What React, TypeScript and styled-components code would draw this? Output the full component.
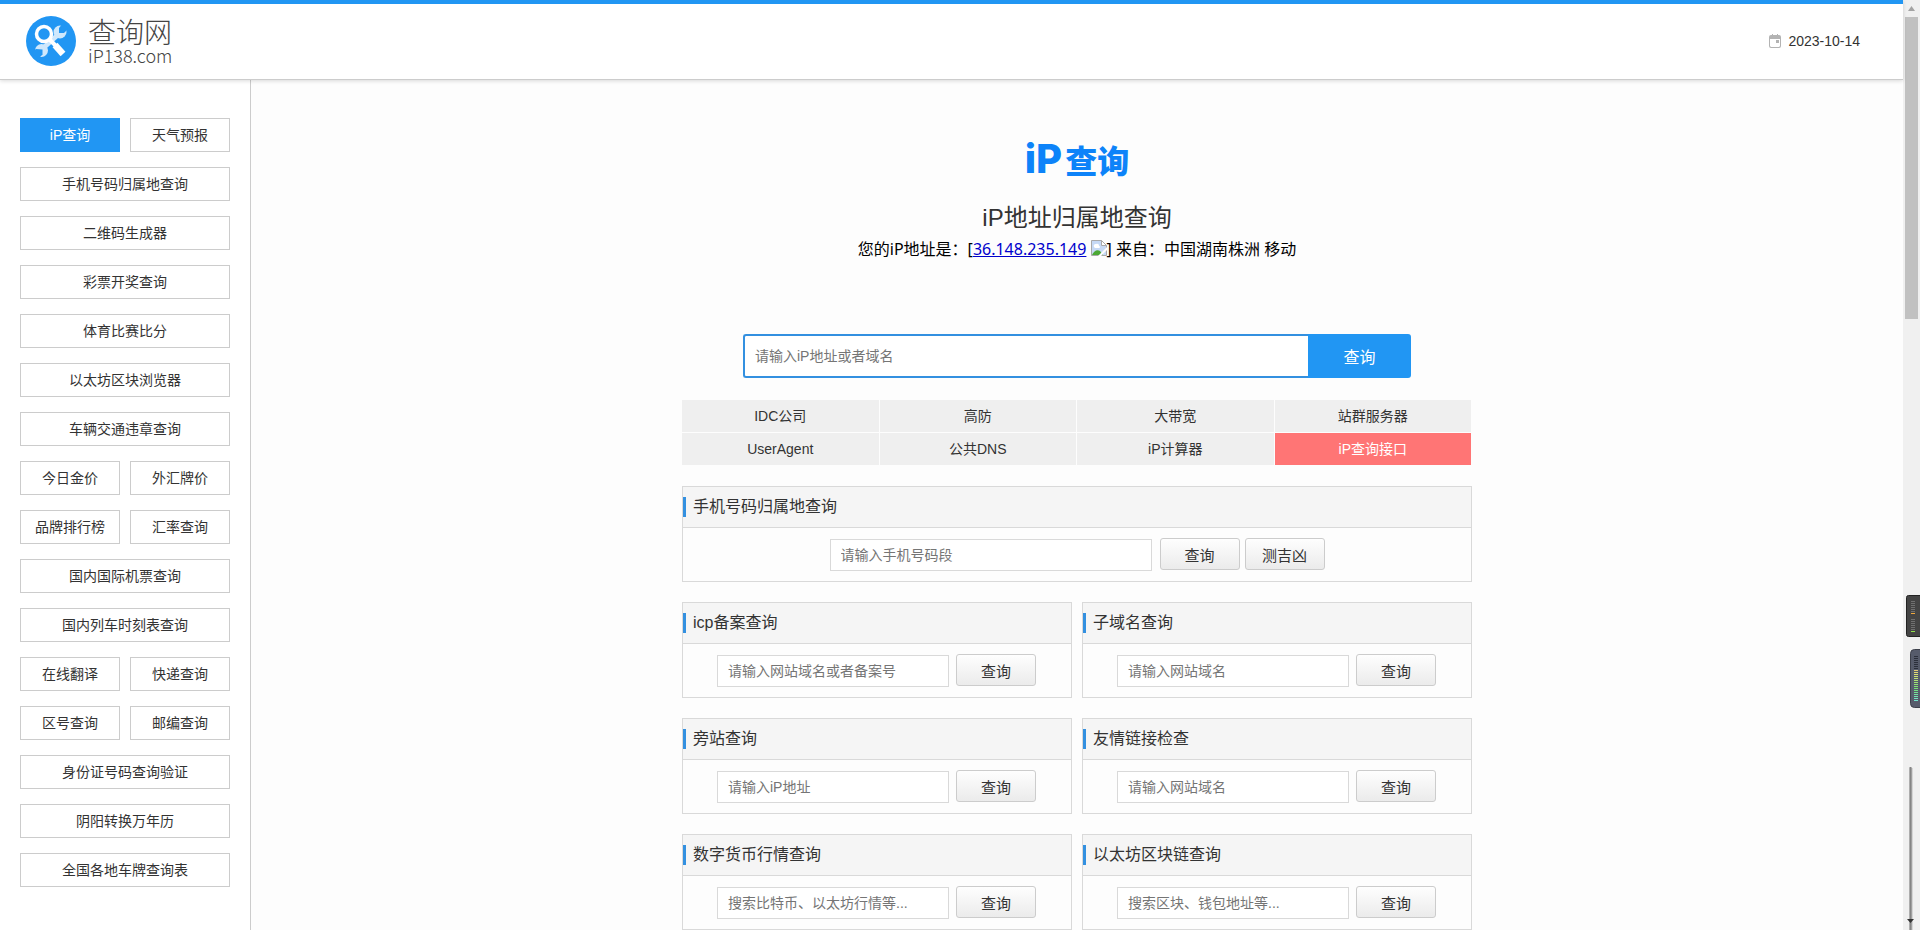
import React from "react";
import styled, { createGlobalStyle, css } from "styled-components";

const GlobalStyle = createGlobalStyle`
  *, *::before, *::after { box-sizing: border-box; }
  body {
    margin: 0;
    background: #fdfdfd;
    color: #333;
    font: 14px/20px "Liberation Sans", "Noto Sans CJK SC", sans-serif;
  }
  input, button { font-family: inherit; }
`;

const Page = styled.div`
  display: grid;
  grid-template-columns: minmax(0, 1fr) 17px;
  min-height: 100vh;
`;

const Site = styled.div`
  display: flex;
  flex-direction: column;
`;

const Header = styled.header`
  display: flex;
  align-items: center;
  justify-content: space-between;
  height: 80px;
  padding: 0 43px 1px 26px;
  background: #fff;
  border-top: 4px solid #2196f3;
  border-bottom: 1px solid #ccc;
  box-shadow: 0 1px 4px rgba(0, 0, 0, 0.15);
  z-index: 1;
`;

const Brand = styled.a`
  display: flex;
  align-items: center;
  gap: 12px;
  color: #444;
  text-decoration: none;
`;

const BrandText = styled.span`
  display: flex;
  flex-direction: column;
  font-family: "Noto Sans CJK SC", sans-serif;
  font-weight: 300;
`;

const BrandName = styled.span`
  font-size: 28px;
  line-height: 28px;
`;

const BrandDomain = styled.span`
  font-size: 18px;
  line-height: 20px;
`;

const Today = styled.div`
  display: flex;
  align-items: center;
  gap: 7px;
`;

const Columns = styled.div`
  display: grid;
  grid-template-columns: 251px minmax(0, 1fr);
  flex: 1;
`;

const Sidebar = styled.nav`
  display: flex;
  flex-wrap: wrap;
  align-content: flex-start;
  gap: 15px 10px;
  padding: 38px 20px;
  background: #fff;
  border-right: 1px solid #ccc;
`;

const SideLink = styled.a<{ $half?: boolean; $active?: boolean }>`
  width: ${(p) => (p.$half ? "100px" : "100%")};
  height: 34px;
  border: 1px solid ${(p) => (p.$active ? "#2196f3" : "#ccc")};
  background: ${(p) => (p.$active ? "#2196f3" : "#fff")};
  color: ${(p) => (p.$active ? "#fff" : "#333")};
  line-height: 32px;
  text-align: center;
  text-decoration: none;
`;

const Main = styled.main`
  display: flex;
  flex-direction: column;
  align-items: center;
  padding-top: 55px;
`;

const Wordmark = styled.div`
  display: flex;
  align-items: center;
  gap: 3px;
  height: 48px;
  color: #0d83f9;
  font: 900 32px/48px "Noto Sans CJK SC", sans-serif;
`;

const Latin = styled.span`
  font: 800 40px/48px Inter, sans-serif;
`;

const Title = styled.h1`
  margin: 19px 0 0;
  font-size: 24px;
  font-weight: 400;
  line-height: 32px;
`;

const Address = styled.p`
  margin: 3px 0 73px;
  color: #000;
  font: 16px/24px "Noto Sans", "Noto Sans CJK SC", sans-serif;
`;

const AddressLink = styled.a`
  color: #00c;
`;

const Search = styled.form`
  display: flex;
  width: 668px;
  height: 44px;
  margin-bottom: 22px;
`;

const SearchInput = styled.input`
  flex: 1;
  min-width: 0;
  padding: 0 10px;
  border: 2px solid #3390e0;
  border-right: 0;
  border-radius: 3px 0 0 3px;
  background: #fff;
  font-size: 14px;
  &::placeholder { color: #757575; }
`;

const SearchButton = styled.button`
  width: 103px;
  border: 0;
  border-radius: 0 3px 3px 0;
  background: #2196f3;
  color: #fff;
  font-size: 16px;
`;

const Content = styled.div`
  width: 790px;
`;

const Promo = styled.nav`
  display: grid;
  grid-template-columns: repeat(4, 1fr);
  gap: 1px;
  margin-bottom: 21px;
  padding-right: 1px;
`;

const PromoLink = styled.a<{ $hot?: boolean }>`
  height: 32px;
  background: ${(p) => (p.$hot ? "#ff7575" : "#efefef")};
  color: ${(p) => (p.$hot ? "#fff" : "#333")};
  line-height: 32px;
  text-align: center;
  text-decoration: none;
`;

const Panels = styled.div`
  display: grid;
  grid-template-columns: 1fr 1fr;
  gap: 20px 10px;
`;

const PanelBox = styled.section<{ $wide?: boolean }>`
  height: 96px;
  border: 1px solid #d9d9d9;
  ${(p) => p.$wide && css`grid-column: 1 / -1;`}
`;

const PanelTitle = styled.h2`
  display: flex;
  align-items: center;
  gap: 7px;
  height: 41px;
  margin: 0;
  border-bottom: 1px solid #d9d9d9;
  background: #f5f5f5;
  font-size: 16px;
  font-weight: 400;
  line-height: 20px;
  &::before {
    content: "";
    width: 3px;
    height: 20px;
    background: #3390e0;
  }
`;

const PanelForm = styled.form<{ $wide?: boolean }>`
  display: flex;
  align-items: flex-start;
  justify-content: center;
  gap: 5px;
  height: 53px;
  padding: 10px ${(p) => (p.$wide ? "0" : "1px")} 0 0;
`;

const PanelInput = styled.input<{ $wide?: boolean }>`
  width: ${(p) => (p.$wide ? "322px" : "232px")};
  height: 32px;
  margin: 1px ${(p) => (p.$wide ? "3px" : "2px")} 0 0;
  padding: 0 10px;
  border: 1px solid #d9d9d9;
  background: #fff;
  font-size: 14px;
  &::placeholder { color: #757575; }
`;

const PanelButton = styled.button`
  width: 80px;
  height: 32px;
  padding: 0;
  border: 1px solid #ccc;
  border-radius: 3px;
  background: linear-gradient(#fefefe, #ebebeb);
  color: #333;
  font-size: 15px;
`;

const Scrollbar = styled.div`
  position: sticky;
  top: 0;
  height: 100vh;
  padding: 17px 2px 0;
  background: #f0f0f0;
`;

const Thumb = styled.div`
  height: 302px;
  background: #c1c1c1;
`;

const ScrollUp = styled.svg`
  position: absolute;
  top: 6px;
  left: 5px;
`;

const Meters = styled.svg`
  position: absolute;
  top: 594px;
  right: 0;
`;

const Slider = styled.svg`
  position: absolute;
  right: 3px;
  bottom: 0;
`;

const Thumbnail = styled.svg`
  vertical-align: -1px;
`;

type SideItem = { label: string; half?: boolean; active?: boolean };

const sideItems: SideItem[] = [
  { label: "iP查询", half: true, active: true },
  { label: "天气预报", half: true },
  { label: "手机号码归属地查询" },
  { label: "二维码生成器" },
  { label: "彩票开奖查询" },
  { label: "体育比赛比分" },
  { label: "以太坊区块浏览器" },
  { label: "车辆交通违章查询" },
  { label: "今日金价", half: true },
  { label: "外汇牌价", half: true },
  { label: "品牌排行榜", half: true },
  { label: "汇率查询", half: true },
  { label: "国内国际机票查询" },
  { label: "国内列车时刻表查询" },
  { label: "在线翻译", half: true },
  { label: "快递查询", half: true },
  { label: "区号查询", half: true },
  { label: "邮编查询", half: true },
  { label: "身份证号码查询验证" },
  { label: "阴阳转换万年历" },
  { label: "全国各地车牌查询表" },
];

const promoItems = ["IDC公司", "高防", "大带宽", "站群服务器", "UserAgent", "公共DNS", "iP计算器", "iP查询接口"];

type PanelItem = { title: string; placeholder: string; wide?: boolean; actions: string[] };

const panels: PanelItem[] = [
  { title: "手机号码归属地查询", placeholder: "请输入手机号码段", wide: true, actions: ["查询", "测吉凶"] },
  { title: "icp备案查询", placeholder: "请输入网站域名或者备案号", actions: ["查询"] },
  { title: "子域名查询", placeholder: "请输入网站域名", actions: ["查询"] },
  { title: "旁站查询", placeholder: "请输入iP地址", actions: ["查询"] },
  { title: "友情链接检查", placeholder: "请输入网站域名", actions: ["查询"] },
  { title: "数字货币行情查询", placeholder: "搜索比特币、以太坊行情等...", actions: ["查询"] },
  { title: "以太坊区块链查询", placeholder: "搜索区块、钱包地址等...", actions: ["查询"] },
];

const LogoIcon = () => (
  <svg width="50" height="50" viewBox="0 0 50 50" aria-hidden="true">
    <circle cx="25" cy="25" r="25" fill="#2196f3" />
    <path d="M14 35 35 16" stroke="#cfe8fc" strokeWidth="5" />
    <circle cx="34" cy="16" r="6.500" fill="#cfe8fc" />
    <path d="M33 17V12L37 7l5 6-4 4z" fill="#2196f3" />
    <circle cx="15.500" cy="34.500" r="6.500" fill="#cfe8fc" />
    <path d="M16.500 33.500v5L12 43l-6-7 4-3z" fill="#2196f3" />
    <circle cx="18" cy="18" r="7.500" fill="#2196f3" stroke="#fff" strokeWidth="3.500" />
    <path d="m23 23 7 7" stroke="#fff" strokeWidth="4" />
    <path d="m29 29 8 9" stroke="#fff" strokeWidth="6.500" />
  </svg>
);

const CalendarIcon = () => (
  <svg width="12" height="14" viewBox="0 0 12 14" aria-hidden="true">
    <path fill="#b3b3b3" fillRule="evenodd" d="M3 0h1v1h4V0h1v1h1a2 2 0 0 1 2 2v9a2 2 0 0 1-2 2H2a2 2 0 0 1-2-2V3a2 2 0 0 1 2-2h1zM1 5v7l1 1h8l1-1V5zm6 1h3v3H7z" />
  </svg>
);

const BrokenImage = () => (
  <Thumbnail width="16" height="16" viewBox="0 0 16 16" role="img" aria-label="图片">
    <path d="M.5.500h10l5 5v10H.5z" fill="#c6d9f5" stroke="#a8a8a8" />
    <path d="M3 7a2 2 0 0 1 2-3 2 2 0 0 1 3 2 1 1 0 0 1 0 2H4z" fill="#fff" />
    <path d="M1 15c2-4 5-6 8-4l3 4z" fill="#4ba834" />
    <path d="M10.500.500v5h5z" fill="#fff" stroke="#a8a8a8" />
    <path d="m7 16 9-9v3l-6 6z" fill="#fdfdfd" />
  </Thumbnail>
);

const range = (n: number) => Array.from({ length: n }, (_, i) => i);

const MeterIcons = () => (
  <Meters width="15" height="115" viewBox="0 0 15 115" aria-hidden="true">
    <rect x="1.500" y="1.500" width="20" height="41" rx="2" fill="#444" stroke="#222" />
    {range(7).map((i) => (
      <rect key={i} x="6" y={7 + i * 2} width="4" height="1" fill={i === 6 ? "#f0a83c" : "#707070"} />
    ))}
    {range(7).map((i) => (
      <rect key={i} x="6" y={25 + i * 2} width="4" height="1" fill={i === 6 ? "#8fe04a" : "#707070"} />
    ))}
    <rect x="5.500" y="55.500" width="20" height="58" rx="4" fill="#565b6b" stroke="#3d404b" />
    {range(23).map((i) => (
      <rect key={i} x="9" y={62 + i * 2} width="4" height="1" fill={i < 7 ? "#2b2f3b" : `hsl(${48 + (i - 7) * 8} 65% 67%)`} />
    ))}
  </Meters>
);

function Panel({ item, id }: { item: PanelItem; id: string }) {
  return (
    <PanelBox $wide={item.wide}>
      <PanelTitle id={id}>{item.title}</PanelTitle>
      <PanelForm $wide={item.wide} onSubmit={(e) => e.preventDefault()}>
        <PanelInput $wide={item.wide} placeholder={item.placeholder} aria-labelledby={id} />
        {item.actions.map((action) => (
          <PanelButton key={action}>{action}</PanelButton>
        ))}
      </PanelForm>
    </PanelBox>
  );
}

export default function App() {
  return (
    <>
      <GlobalStyle />
      <Page>
        <Site>
          <Header>
            <Brand href="#">
              <LogoIcon />
              <BrandText>
                <BrandName>查询网</BrandName>
                <BrandDomain>iP138.com</BrandDomain>
              </BrandText>
            </Brand>
            <Today>
              <CalendarIcon />
              <time dateTime="2023-10-14">2023-10-14</time>
            </Today>
          </Header>
          <Columns>
            <Sidebar>
              {sideItems.map((item) => (
                <SideLink key={item.label} href="#" $half={item.half} $active={item.active}>
                  {item.label}
                </SideLink>
              ))}
            </Sidebar>
            <Main>
              <Wordmark>
                <Latin>iP</Latin>查询
              </Wordmark>
              <Title>iP地址归属地查询</Title>
              <Address>
                您的iP地址是：[<AddressLink href="#">36.148.235.149</AddressLink> <BrokenImage />] 来自：中国湖南株洲 移动
              </Address>
              <Search onSubmit={(e) => e.preventDefault()}>
                <SearchInput placeholder="请输入iP地址或者域名" aria-label="iP地址或者域名" />
                <SearchButton>查询</SearchButton>
              </Search>
              <Content>
                <Promo>
                  {promoItems.map((label, i) => (
                    <PromoLink key={label} href="#" $hot={i === 7}>
                      {label}
                    </PromoLink>
                  ))}
                </Promo>
                <Panels>
                  {panels.map((item, i) => (
                    <Panel key={item.title} item={item} id={`panel-${i}`} />
                  ))}
                </Panels>
              </Content>
            </Main>
          </Columns>
        </Site>
        <Scrollbar aria-hidden="true">
          <ScrollUp width="7" height="5" viewBox="0 0 7 5">
            <path d="M0 5 3.500 0 7 5z" fill="#a3a3a3" />
          </ScrollUp>
          <Thumb />
          <MeterIcons />
          <Slider width="12" height="163" viewBox="0 0 12 163">
            <path d="M6 1v162" stroke="#bbb" strokeWidth="3" />
            <path d="M5.500 0v163" stroke="#858585" strokeWidth="2" />
            <path d="M2 152h7l-3.500 4z" fill="#333" />
          </Slider>
        </Scrollbar>
      </Page>
    </>
  );
}
